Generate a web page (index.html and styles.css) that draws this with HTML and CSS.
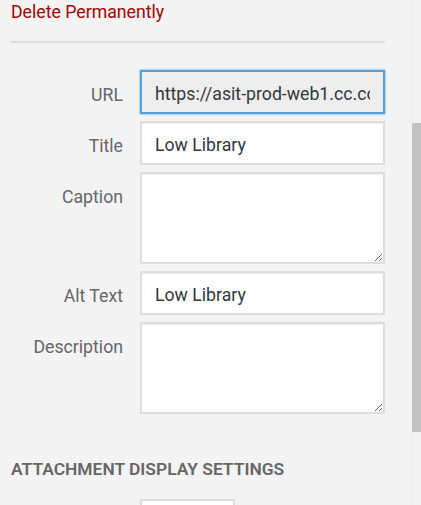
FILE: index.html
```html
<!DOCTYPE html>
<html>
<head>
<meta charset="utf-8">
<link rel="stylesheet" href="styles.css">
</head>
<body>
<div class="page">
  <div class="sidebar">
    <div class="actions"><a class="delete" href="#">Delete Permanently</a></div>
    <div class="settings">
      <label class="setting">
        <span class="name">URL</span>
        <input class="field url" type="text" readonly value="https://asit-prod-web1.cc.columbia.edu/wp-content/uploads/low-library.jpg">
      </label>
      <label class="setting">
        <span class="name">Title</span>
        <input class="field" type="text" value="Low Library">
      </label>
      <label class="setting">
        <span class="name">Caption</span>
        <textarea class="field area"></textarea>
      </label>
      <label class="setting">
        <span class="name">Alt Text</span>
        <input class="field" type="text" value="Low Library">
      </label>
      <label class="setting">
        <span class="name">Description</span>
        <textarea class="field area"></textarea>
      </label>
    </div>
    <h2 class="section-title">Attachment Display Settings</h2>
    <div class="settings">
      <div class="setting">
        <span class="name"></span>
        <div class="select-box"></div>
      </div>
    </div>
  </div>
  <div class="scroll-track"><div class="scroll-thumb"></div></div>
</div>
</body>
</html>
```
FILE: styles.css
```css
html, body {
  margin: 0;
  padding: 0;
  background: #f3f3f3;
  overflow: hidden;
}
body {
  font-family: Roboto, "Noto Sans", sans-serif;
  font-size: 17.7px;
  color: #444;
}
.page {
  display: flex;
  height: 505px;
  overflow: hidden;
}
.sidebar {
  width: 374px;
  padding: 0 25px 0 11px;
  flex: none;
}
.actions {
  line-height: 24px;
  padding-bottom: 17px;
  border-bottom: 2px solid #ddd;
  margin-bottom: 27px;
}
.delete {
  color: #a00;
  text-decoration: none;
}
.settings {
  display: flex;
  flex-direction: column;
  gap: 7px;
}
.setting {
  display: grid;
  grid-template-columns: 112px 245px;
  column-gap: 17px;
  align-items: start;
}
.name {
  text-align: right;
  color: #666;
  line-height: 50px;
  height: 44px;
}
.field {
  display: block;
  box-sizing: border-box;
  width: 245px;
  height: 44px;
  margin: 0;
  padding: 3px 13px 0;
  border: 2px solid #ddd;
  border-radius: 0;
  background: #fff;
  box-shadow: inset 0 1px 2px rgba(0, 0, 0, .07);
  font-family: Roboto, "Noto Sans", sans-serif;
  font-size: 17.7px;
  color: #32373c;
  outline: none;
}
.url {
  background: #eee;
  border-color: #5b9dd9;
  box-shadow: 0 0 2px rgba(30, 140, 190, .8);
}
.area {
  height: 92px;
  padding: 10px 13px;
  resize: vertical;
}
.section-title {
  margin: 43px 0 18px;
  font-size: 17.4px;
  font-weight: 600;
  line-height: 24px;
  text-transform: uppercase;
  color: #666;
}
.select-box {
  box-sizing: border-box;
  width: 95px;
  height: 44px;
  border: 2px solid #ddd;
  background: #fff;
}
.scroll-track {
  flex: 1;
  background: #f1f1f1;
  padding-left: 2px;
}
.scroll-thumb {
  margin-top: 123px;
  height: 309px;
  background: #c1c1c1;
}
```
